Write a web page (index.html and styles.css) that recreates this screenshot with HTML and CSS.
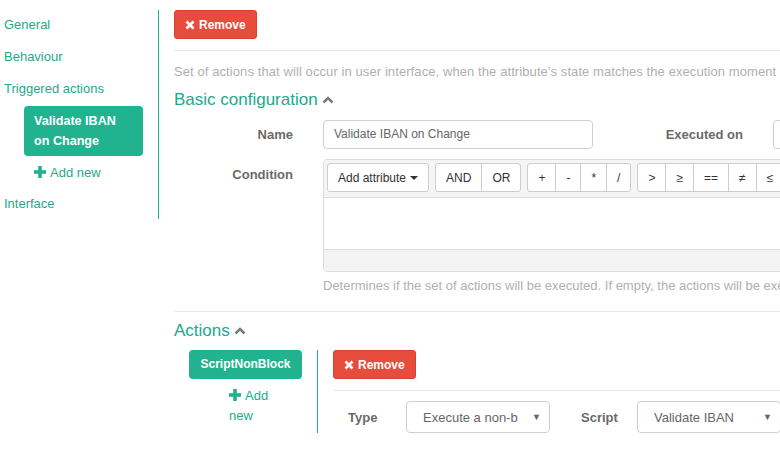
FILE: index.html
```html
<!DOCTYPE html>
<html>
<head>
<meta charset="utf-8">
<link rel="stylesheet" href="styles.css">
</head>
<body>
<div class="page">
  <nav class="sidebar">
    <a class="nav-link">General</a>
    <a class="nav-link">Behaviour</a>
    <a class="nav-link">Triggered actions</a>
    <div class="sub">
      <a class="active-item">Validate IBAN<br>on Change</a>
      <a class="add-link"><svg class="plus" width="12" height="12" viewBox="0 0 12 12"><rect x="4.2" y="0" width="3.6" height="12"/><rect x="0" y="4.2" width="12" height="3.6"/></svg>Add new</a>
    </div>
    <a class="nav-link">Interface</a>
  </nav>

  <main class="main">
    <button class="btn-danger"><svg class="xicon" width="10" height="10" viewBox="0 0 10 10"><path d="M1.5 1.5 L8.5 8.5 M8.5 1.5 L1.5 8.5"/></svg>Remove</button>
    <div class="rule"></div>
    <p class="desc">Set of actions that will occur in user interface, when the attribute's state matches the execution moment</p>

    <h3 class="section-title">Basic configuration <svg class="chev" width="12" height="8" viewBox="0 0 12 8"><path d="M1.5 6.5 L6 2 L10.5 6.5"/></svg></h3>

    <div class="form-row">
      <label class="lbl">Name</label>
      <div class="input name-input">Validate IBAN on Change</div>
      <label class="lbl lbl-exec">Executed on</label>
      <div class="input exec-input"></div>
    </div>

    <div class="form-row cond-row">
      <label class="lbl lbl-top">Condition</label>
      <div class="cond-col">
        <div class="cond-box">
          <div class="toolbar">
            <div class="btn-group">
              <span class="tbtn">Add attribute <span class="caret"></span></span>
            </div>
            <div class="btn-group">
              <span class="tbtn">AND</span><span class="tbtn">OR</span>
            </div>
            <div class="btn-group">
              <span class="tbtn">+</span><span class="tbtn">-</span><span class="tbtn">*</span><span class="tbtn">/</span>
            </div>
            <div class="btn-group">
              <span class="tbtn">&gt;</span><span class="tbtn">≥</span><span class="tbtn">==</span><span class="tbtn">≠</span><span class="tbtn">≤</span><span class="tbtn">&lt;</span>
            </div>
          </div>
          <div class="editor"></div>
          <div class="statusbar"></div>
        </div>
        <p class="help">Determines if the set of actions will be executed. If empty, the actions will be executed always.</p>
      </div>
    </div>

    <div class="rule rule2"></div>
    <h3 class="section-title">Actions <svg class="chev" width="12" height="8" viewBox="0 0 12 8"><path d="M1.5 6.5 L6 2 L10.5 6.5"/></svg></h3>

    <div class="actions">
      <div class="actions-list">
        <a class="action-item">ScriptNonBlock</a>
        <a class="add-link add-small"><svg class="plus" width="12" height="12" viewBox="0 0 12 12"><rect x="4.2" y="0" width="3.6" height="12"/><rect x="0" y="4.2" width="12" height="3.6"/></svg>Add new</a>
      </div>
      <div class="action-detail">
        <button class="btn-danger"><svg class="xicon" width="10" height="10" viewBox="0 0 10 10"><path d="M1.5 1.5 L8.5 8.5 M8.5 1.5 L1.5 8.5"/></svg>Remove</button>
        <div class="rule"></div>
        <div class="detail-row">
          <label class="lbl2">Type</label>
          <div class="select"><span class="select-text">Execute a non-blocking script</span><span class="arrow">▼</span></div>
          <label class="lbl2 lbl-script">Script</label>
          <div class="select"><span class="select-text">Validate IBAN</span><span class="arrow">▼</span></div>
        </div>
      </div>
    </div>
  </main>
</div>
</body>
</html>
```

FILE: styles.css
```css
* { box-sizing: border-box; }
html, body {
  margin: 0;
  padding: 0;
  background: #fff;
  overflow: hidden;
  width: 780px;
  height: 460px;
}
body {
  font-family: "Liberation Sans", Arial, sans-serif;
  font-size: 13px;
  color: #333;
}
.page {
  display: flex;
  align-items: flex-start;
  width: 1000px;
}
.sidebar {
  width: 159px;
  flex: none;
  border-right: 1px solid #21b08f;
  margin-top: 10px;
  display: flex;
  flex-direction: column;
}
.nav-link {
  display: block;
  line-height: 30px;
  height: 32px;
  padding-left: 4px;
  color: #1fa98a;
  text-decoration: none;
}
.sidebar > .nav-link:last-child { line-height: 32px; height: 31px; }
.sub {
  padding-left: 24px;
  padding-top: 0;
}
.active-item {
  display: block;
  width: 119px;
  background: #21b38f;
  color: #fff;
  font-weight: bold;
  font-size: 12.6px;
  line-height: 20px;
  padding: 5px 10px;
  border-radius: 4px;
}
.add-link {
  display: flex;
  align-items: center;
  height: 32px;
  padding-left: 10px;
  color: #1fa98a;
  font-size: 13px;
}
.plus { fill: #21b08f; margin-right: 4px; }

.main {
  width: 640px;
  flex: none;
  margin-left: 15px;
  padding-top: 10px;
}
.btn-danger {
  display: inline-flex;
  align-items: center;
  height: 29px;
  padding: 0 10px;
  background: #e84c3d;
  border: 1px solid #d8402f;
  border-radius: 3px;
  color: #fff;
  font-family: "Liberation Sans", Arial, sans-serif;
  font-size: 12px;
  font-weight: bold;
}
.xicon { stroke: #fff; stroke-width: 2.6; margin-right: 4px; }
.rule {
  height: 1px;
  background: #e8e8e8;
  margin-top: 11px;
}
.desc {
  margin: 12px 0 0 0;
  line-height: 18px;
  color: #b0b0b0;
  white-space: nowrap;
  letter-spacing: 0.09px;
}
.section-title {
  margin: 9px 0 0 0;
  font-size: 17px;
  font-weight: normal;
  line-height: 20px;
  color: #22a88b;
  display: flex;
  align-items: center;
}
.chev {
  fill: none;
  stroke: #7b7b7b;
  stroke-width: 2.6;
  margin-left: 4px;
}
.form-row {
  display: flex;
  align-items: center;
  margin-top: 10px;
}
.lbl {
  width: 119px;
  flex: none;
  text-align: right;
  font-weight: bold;
  color: #6a6a6a;
  margin-right: 30px;
}
.input {
  height: 29px;
  border: 1px solid #cfcfcf;
  border-radius: 4px;
  padding: 0 10px;
  line-height: 27px;
  font-size: 12px;
  color: #666;
  flex: none;
}
.name-input { width: 270px; }
.lbl-exec { width: 150px; margin-right: 30px; }
.exec-input { width: 120px; }
.cond-row {
  align-items: flex-start;
  margin-top: 10px;
}
.lbl-top { padding-top: 8px; }
.cond-col { flex: none; width: 520px; }
.cond-box {
  border: 1px solid #dcdcdc;
  border-radius: 4px;
  overflow: hidden;
}
.toolbar {
  display: flex;
  background: #f5f5f5;
  padding: 3px 4px 5px 3px;
  gap: 6px;
  border-bottom: 1px solid #dcdcdc;
}
.btn-group {
  display: flex;
  flex: none;
}
.tbtn {
  display: inline-flex;
  align-items: center;
  height: 29px;
  padding: 0 10px;
  background: #fff;
  border: 1px solid #cccccc;
  margin-left: -1px;
  font-size: 12px;
  color: #333;
  white-space: nowrap;
}
.btn-group .tbtn:first-child { border-radius: 3px 0 0 3px; margin-left: 0; }
.btn-group .tbtn:last-child { border-radius: 0 3px 3px 0; }
.btn-group .tbtn:only-child { border-radius: 3px; }
.caret {
  display: inline-block;
  width: 0;
  height: 0;
  border-left: 4px solid transparent;
  border-right: 4px solid transparent;
  border-top: 4px solid #333;
  margin-left: 4px;
}
.editor {
  height: 52px;
  background: #fff;
  border-bottom: 1px solid #dcdcdc;
}
.statusbar {
  height: 21px;
  background: #f3f3f3;
}
.help {
  margin: 5px 0 0 0;
  line-height: 18px;
  color: #b0b0b0;
  white-space: nowrap;
}
.rule2 { margin-top: 16px; }
.actions {
  display: flex;
  align-items: flex-start;
  margin-top: 9px;
}
.actions-list {
  width: 144px;
  flex: none;
  border-right: 1px solid #21b08f;
  height: 83px;
  display: flex;
  flex-direction: column;
  align-items: center;
}
.action-item {
  display: block;
  width: 113px;
  height: 29px;
  line-height: 29px;
  text-align: center;
  background: #21b38f;
  color: #fff;
  font-weight: bold;
  font-size: 12px;
  border-radius: 4px;
}
.add-small {
  display: block;
  width: 48px;
  height: auto;
  padding: 0;
  margin-top: 7px;
  line-height: 20px;
  align-self: flex-start;
  margin-left: 55px;
}
.add-small .plus { vertical-align: -1px; }
.action-detail {
  flex: none;
  width: 470px;
  padding-left: 15px;
}
.detail-row {
  display: flex;
  align-items: center;
  margin-top: 10px;
}
.lbl2 {
  font-weight: bold;
  color: #6a6a6a;
  padding-left: 15px;
  width: 73px;
  flex: none;
}
.lbl-script { padding-left: 31px; width: 87px; }
.select {
  width: 144px;
  height: 32px;
  border: 1px solid #cfcfcf;
  border-radius: 4px;
  display: flex;
  align-items: center;
  padding: 0 8px 0 16px;
  flex: none;
}
.select-text {
  width: 95px;
  overflow: hidden;
  white-space: nowrap;
  color: #666;
  font-size: 13px;
}
.arrow {
  margin-left: auto;
  font-size: 9px;
  color: #666;
}
```
